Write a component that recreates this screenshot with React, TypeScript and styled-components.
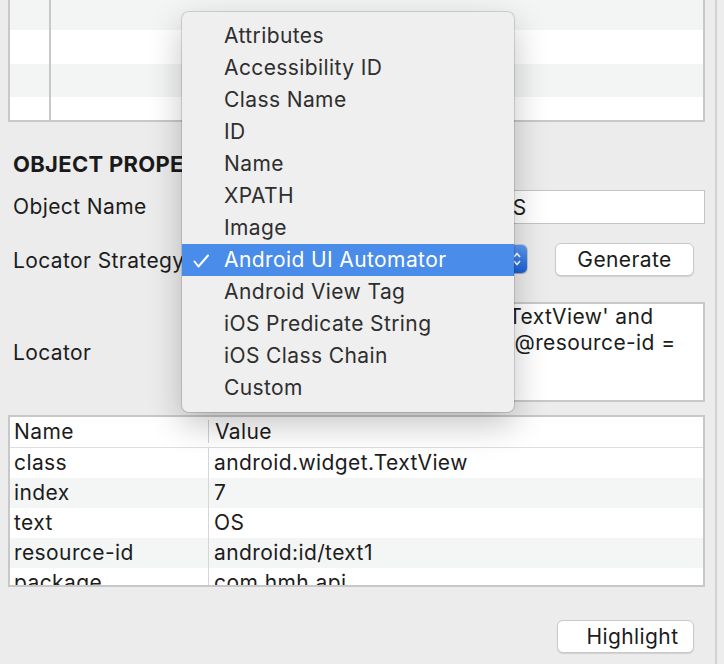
import React from "react";
import styled, { createGlobalStyle } from "styled-components";

const FONT = `Inter, "Liberation Sans", Arial, sans-serif`;

const Global = createGlobalStyle`
  html, body { margin: 0; padding: 0; background: #ececec; }
  * { box-sizing: border-box; }
`;

const Window = styled.div`
  position: relative;
  width: 724px;
  height: 664px;
  overflow: hidden;
  display: flex;
  background: #ececec;
  font-family: ${FONT};
  font-size: 21px;
  letter-spacing: 0.4px;
  color: #1c1c1c;
`;

const Main = styled.div`
  width: 715px;
  padding: 0 10px 0 8px;
  display: flex;
  flex-direction: column;
`;

const SideRule = styled.div`
  width: 2px;
  background: #d2d2d2;
`;

const Gutter = styled.div`
  flex: 1;
  background: #ededed;
`;

/* ---------- top (hierarchy) table ---------- */
const TopTable = styled.div`
  height: 122px;
  flex: none;
  border: 2px solid #c8c8c8;
  border-top: none;
  background: #fff;
  display: flex;
  flex-direction: column;
  overflow: hidden;
`;

const TopRow = styled.div<{ $h: number; $striped: boolean }>`
  height: ${(p) => p.$h}px;
  flex: none;
  display: grid;
  grid-template-columns: 41px 1fr;
  background: ${(p) => (p.$striped ? "#f3f4f4" : "#ffffff")};
`;

const TopCell = styled.div`
  border-right: 2px solid #c8c8c8;
`;

/* ---------- properties form ---------- */
const SectionTitle = styled.h2`
  margin: 30px 0 0 5px;
  font-size: 22px;
  font-weight: 700;
  line-height: 24px;
  letter-spacing: 0.3px;
  color: #1a1a1a;
  white-space: nowrap;
`;

const FormRow = styled.div<{ $gap: number; $h: number }>`
  margin-top: ${(p) => p.$gap}px;
  height: ${(p) => p.$h}px;
  flex: none;
  display: grid;
  grid-template-columns: 207px 1fr;
  align-items: center;
`;

const Label = styled.label<{ $drop?: number }>`
  padding-left: 5px;
  padding-top: ${(p) => p.$drop ?? 0}px;
  line-height: 24px;
  white-space: nowrap;
`;

const TextField = styled.div`
  height: 34px;
  border: 1px solid #c4c4c4;
  background: #fff;
  padding: 0 4px;
  display: flex;
  align-items: center;
  white-space: nowrap;
  overflow: hidden;
`;

const StrategyControls = styled.div`
  display: flex;
  align-items: center;
  gap: 28px;
`;

const PopUp = styled.div`
  width: 312px;
  height: 28px;
  display: flex;
  background: #fff;
  border-radius: 5px;
  box-shadow: 0 0 0 1px rgba(0, 0, 0, 0.14), 0 1px 1px rgba(0, 0, 0, 0.18);
  overflow: hidden;
`;

const PopUpText = styled.span`
  flex: 1;
  padding-left: 8px;
  line-height: 28px;
  white-space: nowrap;
`;

const PopUpArrow = styled.span`
  width: 20px;
  background: linear-gradient(#5b9bf6, #1b61da);
  display: flex;
  align-items: center;
  justify-content: center;
`;

const PushButton = styled.button<{ $w: number; $shift?: number }>`
  width: ${(p) => p.$w}px;
  height: 33px;
  flex: none;
  border-radius: 6px;
  border: 1px solid #c9c9c9;
  background: #fff;
  box-shadow: 0 1px 1px rgba(0, 0, 0, 0.12);
  font-family: ${FONT};
  font-size: 21px;
  letter-spacing: 0.4px;
  color: #1c1c1c;
  padding: 0 0 0 ${(p) => p.$shift ?? 0}px;
  text-align: center;
  white-space: nowrap;
`;

const LocatorBox = styled.div`
  height: 100px;
  border: 2px solid #c8c8c8;
  background: #fff;
  padding: 0 0 0 2px;
  line-height: 26px;
  overflow: hidden;
`;

const LocatorLine = styled.div`
  white-space: nowrap;
`;

/* ---------- attributes table ---------- */
const PropTable = styled.div`
  margin-top: 13px;
  height: 172px;
  flex: none;
  border: 2px solid #c8c8c8;
  background: #fff;
  overflow: hidden;
`;

const HeadRow = styled.div`
  height: 31px;
  display: grid;
  grid-template-columns: 198px 1fr;
  align-items: center;
  border-bottom: 1px solid #dedede;
`;

const HeadCell = styled.div<{ $sep?: boolean }>`
  position: relative;
  padding-left: ${(p) => (p.$sep ? 7 : 4)}px;
  line-height: 30px;
  &::before {
    content: "";
    display: ${(p) => (p.$sep ? "block" : "none")};
    position: absolute;
    left: 0;
    top: 3px;
    bottom: 4px;
    width: 1px;
    background: #d0d0d0;
  }
`;

const BodyRow = styled.div<{ $striped: boolean }>`
  height: 30px;
  display: grid;
  grid-template-columns: 198px 1fr;
  background: ${(p) => (p.$striped ? "#f4f5f5" : "#ffffff")};
`;

const BodyCell = styled.div<{ $value?: boolean }>`
  padding-left: ${(p) => (p.$value ? 5 : 4)}px;
  line-height: 30px;
  white-space: nowrap;
  border-left: ${(p) => (p.$value ? "1px solid #d6d6d6" : "none")};
`;

const ButtonBar = styled.div`
  margin-top: 33px;
  display: flex;
  justify-content: flex-end;
  padding-right: 11px;
`;

/* ---------- dropdown menu (overlay) ---------- */
const Menu = styled.div`
  position: absolute;
  left: 182px;
  top: 12px;
  width: 332px;
  height: 400px;
  padding: 8px 0;
  background: #efefef;
  border-radius: 7px;
  box-shadow: 0 0 0 1px rgba(0, 0, 0, 0.13), 0 12px 34px rgba(0, 0, 0, 0.24);
  font-family: ${FONT};
  font-size: 21px;
  letter-spacing: 0.4px;
  overflow: hidden;
`;

const MenuItem = styled.div<{ $selected?: boolean }>`
  position: relative;
  height: 32px;
  line-height: 32px;
  padding-left: 42px;
  white-space: nowrap;
  color: ${(p) => (p.$selected ? "#ffffff" : "#2e2e2e")};
  background: ${(p) => (p.$selected ? "#4a8cea" : "transparent")};
`;

const CheckMark = styled.svg`
  position: absolute;
  left: 11px;
  top: 10px;
`;

const strategies = [
  "Attributes",
  "Accessibility ID",
  "Class Name",
  "ID",
  "Name",
  "XPATH",
  "Image",
  "Android UI Automator",
  "Android View Tag",
  "iOS Predicate String",
  "iOS Class Chain",
  "Custom",
];

const props: [string, string][] = [
  ["class", "android.widget.TextView"],
  ["index", "7"],
  ["text", "OS"],
  ["resource-id", "android:id/text1"],
  ["package", "com.hmh.api"],
];

const topRows = [30, 34, 33, 23];

export default function App() {
  return (
    <>
      <Global />
      <Window>
        <Main>
          <TopTable>
            {topRows.map((h, i) => (
              <TopRow key={i} $h={h} $striped={i % 2 === 0}>
                <TopCell />
                <div />
              </TopRow>
            ))}
          </TopTable>

          <SectionTitle>OBJECT PROPERTIES</SectionTitle>

          <FormRow $gap={14} $h={34}>
            <Label>Object Name</Label>
            <TextField>android.widget.TextView - OS</TextField>
          </FormRow>

          <FormRow $gap={18} $h={34}>
            <Label $drop={4}>Locator Strategy</Label>
            <StrategyControls>
              <PopUp>
                <PopUpText>Android UI Automator</PopUpText>
                <PopUpArrow>
                  <svg width="8" height="16" viewBox="0 0 8 16">
                    <polyline points="1,6 4,2.5 7,6" fill="none" stroke="#fff" strokeWidth="1.6" />
                    <polyline points="1,10 4,13.5 7,10" fill="none" stroke="#fff" strokeWidth="1.6" />
                  </svg>
                </PopUpArrow>
              </PopUp>
              <PushButton $w={139}>Generate</PushButton>
            </StrategyControls>
          </FormRow>

          <FormRow $gap={26} $h={100}>
            <Label $drop={2}>Locator</Label>
            <LocatorBox>
              <LocatorLine>//*[@class='android.widget.TextView' and</LocatorLine>
              <LocatorLine>(@text='OS' or . = 'OS') and @resource-id =</LocatorLine>
              <LocatorLine>'android:id/text1']</LocatorLine>
            </LocatorBox>
          </FormRow>

          <PropTable>
            <HeadRow>
              <HeadCell>Name</HeadCell>
              <HeadCell $sep>Value</HeadCell>
            </HeadRow>
            {props.map(([k, v], i) => (
              <BodyRow key={k} $striped={i % 2 === 1}>
                <BodyCell>{k}</BodyCell>
                <BodyCell $value>{v}</BodyCell>
              </BodyRow>
            ))}
          </PropTable>

          <ButtonBar>
            <PushButton $w={137} $shift={14}>Highlight</PushButton>
          </ButtonBar>
        </Main>
        <SideRule />
        <Gutter />

        <Menu role="listbox">
          {strategies.map((s) => {
            const sel = s === "Android UI Automator";
            return (
              <MenuItem key={s} $selected={sel}>
                {sel && (
                  <CheckMark width="16" height="14" viewBox="0 0 16 14">
                    <polyline points="1.5,7.5 5.5,12.5 15,1.5" fill="none" stroke="#fff" strokeWidth="2" strokeLinecap="round" strokeLinejoin="round" />
                  </CheckMark>
                )}
                {s}
              </MenuItem>
            );
          })}
        </Menu>
      </Window>
    </>
  );
}
